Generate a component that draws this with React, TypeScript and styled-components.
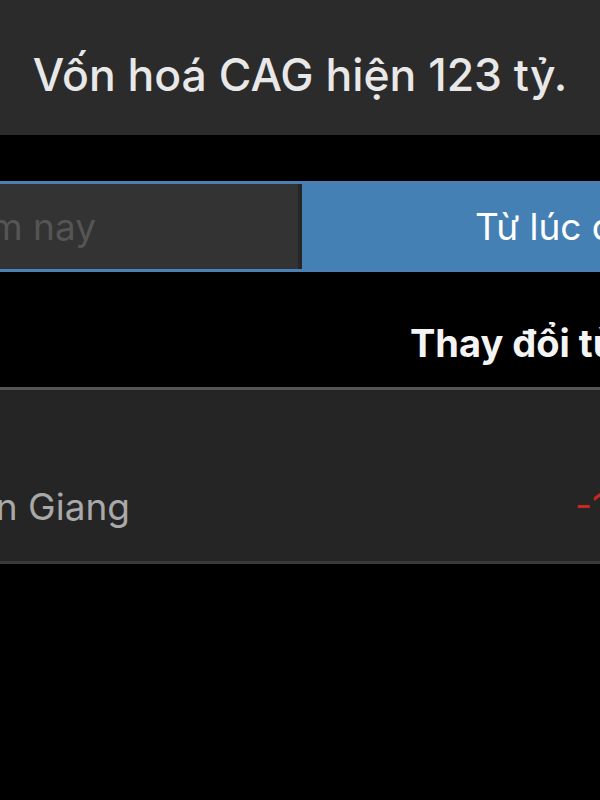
import styled, { createGlobalStyle } from 'styled-components';

const GlobalStyle = createGlobalStyle`
  html, body {
    margin: 0;
    padding: 0;
    background: #000000;
    overflow: hidden;
  }
  body {
    font-family: 'Inter', 'Noto Sans', sans-serif;
    -webkit-font-smoothing: antialiased;
  }
`;

const Screen = styled.div`
  width: 600px;
  height: 800px;
  background: #000000;
  overflow: hidden;
`;

const TitleBar = styled.div`
  height: 135px;
  box-sizing: border-box;
  padding-top: 14px;
  background: #2b2b2b;
  display: flex;
  align-items: center;
  justify-content: center;
`;

const Title = styled.h1`
  margin: 0;
  font-size: 44.5px;
  font-weight: 500;
  color: #e8e8e8;
  white-space: nowrap;
`;

const TabBar = styled.div`
  margin-top: 46px;
  height: 91px;
  box-sizing: border-box;
  border-top: 3px solid #4a80b4;
  border-bottom: 3px solid #4a80b4;
  background: #4580b5;
  display: flex;
  overflow: hidden;
`;

const Tab = styled.div<{ $active?: boolean }>`
  flex: ${(p) => (p.$active ? '1' : '0 0 302px')};
  min-width: 0;
  display: flex;
  align-items: center;
  justify-content: ${(p) => (p.$active ? 'flex-start' : 'flex-end')};
  box-sizing: border-box;
  padding: ${(p) => (p.$active ? '0 0 0 173px' : '0 202px 0 0')};
  background: ${(p) => (p.$active ? '#4580b5' : '#333333')};
  border-right: ${(p) => (p.$active ? 'none' : '4px solid #262626')};
  color: ${(p) => (p.$active ? '#ffffff' : '#555555')};
  font-size: 37px;
  white-space: nowrap;
  overflow: hidden;
`;

const ColumnHeader = styled.div`
  height: 118px;
  display: flex;
  align-items: center;
  padding: 26px 0 0 410px;
  box-sizing: border-box;
  border-bottom: 3px solid #555555;
  overflow: hidden;
  white-space: nowrap;
  color: #f4f4f4;
  font-size: 38px;
  font-weight: 700;
`;

const Row = styled.div`
  height: 174px;
  box-sizing: border-box;
  padding-top: 62px;
  background: #252525;
  border-bottom: 3px solid #3a3a3a;
  display: grid;
  grid-template-columns: 130px 1fr;
  align-items: center;
  overflow: hidden;
  white-space: nowrap;
`;

const Name = styled.div`
  display: flex;
  justify-content: flex-end;
  color: #a9a9a9;
  font-size: 37px;
`;

const Change = styled.div<{ $down?: boolean }>`
  padding-left: 445px;
  color: ${(p) => (p.$down ? '#c9281e' : '#2fa84f')};
  font-size: 37px;
`;

export default function App() {
  return (
    <Screen>
      <GlobalStyle />
      <TitleBar>
        <Title>Vốn hoá CAG hiện 123 tỷ.</Title>
      </TitleBar>
      <TabBar>
        <Tab>Hôm nay</Tab>
        <Tab $active>Từ lúc đầu tư</Tab>
      </TabBar>
      <ColumnHeader>Thay đổi từ đầu</ColumnHeader>
      <Row>
        <Name>Kiên Giang</Name>
        <Change $down>-12,5%</Change>
      </Row>
    </Screen>
  );
}
